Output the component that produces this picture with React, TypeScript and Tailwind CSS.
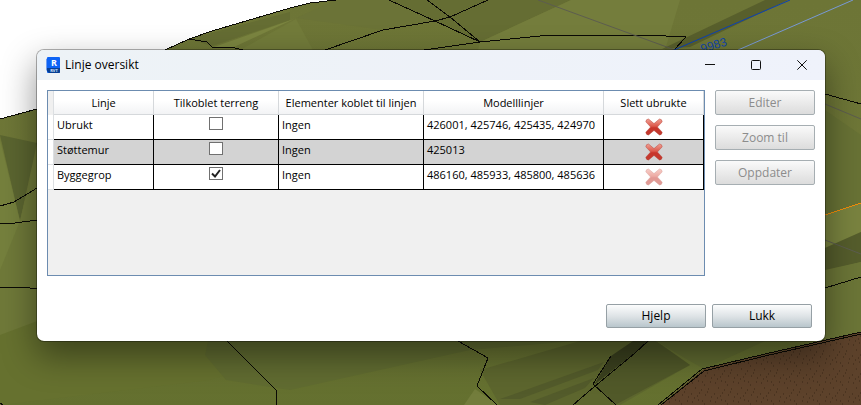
import { useState } from "react"
import clsx from "clsx"

const lines = [
  { name: "Ubrukt", terrain: false, elements: "Ingen", models: "426001, 425746, 425435, 424970", removable: true },
  { name: "Støttemur", terrain: false, elements: "Ingen", models: "425013", removable: true },
  { name: "Byggegrop", terrain: true, elements: "Ingen", models: "486160, 485933, 485800, 485636", removable: false },
]

const columns = ["Linje", "Tilkoblet terreng", "Elementer koblet til linjen", "Modelllinjer", "Slett ubrukte"]

function Terrain() {
  return (
    <svg
      className="absolute inset-0 h-full w-full"
      viewBox="0 0 861 405"
      preserveAspectRatio="xMidYMid slice"
      aria-hidden="true"
    >
      <defs>
        <linearGradient id="ground" x1="0" y1="0" x2="0" y2="1">
          <stop offset="0" stopColor="#6d7536" />
          <stop offset="0.6" stopColor="#6f7838" />
          <stop offset="1" stopColor="#64702f" />
        </linearGradient>
        <pattern id="soil" width="23" height="19" patternUnits="userSpaceOnUse">
          <rect width="23" height="19" fill="#5d422b" />
          <path
            d="M2 3h1M8 1h1M14 5h1M20 2h1M5 8h1M11 10h1M18 9h1M1 14h1M7 16h1M15 15h1M21 17h1M12 2h1M9 13h1M17 12h1M4 18h1"
            stroke="#3b2817"
            strokeWidth="1"
          />
        </pattern>
      </defs>
      <rect width="861" height="405" fill="#fff" />
      <path d="M0 119 37 109 165 50 189 39 212 31 290 8 310 3 336 0H861V405H0Z" fill="url(#ground)" />

      {/* facets */}
      <path d="M189 39 290 12V20L212 46Z" fill="#656d33" />
      <path d="M240 50 296 19 313 50Z" fill="#727b3a" />
      <path d="M214 47 294 19 234 47Z" fill="#7b8540" />
      <path d="M296 18 336 0H390L435 21 383 30Z" fill="#6b7337" />
      <path d="M390 0H571L480 42 435 21Z" fill="#656d33" />
      <path d="M480 42 571 0H680L665 50H478Z" fill="#747d3c" />
      <path d="M765 0H788L690 47 662 49Z" fill="#585f2c" />
      <path d="M0 135 37 143 20 221Z" fill="#5b6530" />
      <path d="M0 140 20 221 0 290Z" fill="#75803d" />
      <path d="M20 221 37 150V340L0 400V270Z" fill="#6f7939" />
      <path d="M825 110 861 135V203L825 214Z" fill="#687235" />
      <path d="M825 215 861 203V232L825 248Z" fill="#79833f" />
      <path d="M825 248 861 232V262L825 270Z" fill="#555d2c" />
      <path d="M825 271 861 262V332L825 341Z" fill="#6b7537" />
      <path d="M0 335 40 320 220 341 330 341 210 380 0 405Z" fill="#66712f" />
      <path d="M208 341H575L470 350 290 390 226 380 205 355Z" fill="#616c31" />
      <path d="M475 389 464 405H498Z" fill="#737d3c" />
      <path d="M480 370 580 341H656L690 365 620 405H500Z" fill="#5d662e" />
      <path d="M611 356 633 341H650L594 385Z" fill="#3b411f" />
      <path d="M596 386 650 341 656 341 690 365 615 405Z" fill="#515929" />
      <path d="M500 399 604 362 598 370 520 399ZM530 402 594 378 585 388 545 405Z" fill="#535b2b" />
      <path d="M656 341H765L704 369 688 360Z" fill="#616b31" />
      <path d="M704 369 861 332V405H660Z" fill="url(#soil)" />

      {/* triangulation edges */}
      <g fill="none" stroke="#0a0a05" shapeRendering="crispEdges">
        <path d="M0 119 37 109M165 50 189 39 212 31 290 8 310 3 336 0M189 39 207 42 212 47 231 47 243 50" />
        <path d="M325 50 383 30 435 21 450 17 488 0M389 0 435 21 480 42M427 0 450 17 480 42M424 50 480 42 550 35 645 35 686 37 674 50" />
        <path d="M825 94 861 104M0 206 14 202 37 188M0 223 15 223 37 220M0 287 23 287 37 289" />
        <path d="M227 341 250 364 276 390V405M458 341 488 358 477 386 497 405M0 403 3 405" />
        <path d="M648 341 635 353 594 387 573 405M611 356 593 384 616 405M825 288 861 277" />
        <path d="M658 405 702 369 765 354 861 332M661 405 704 371 765 356 861 334" />
      </g>
      <g fill="none">
        <path d="M538 0 675 50M825 240 861 254" stroke="#5d5d50" />
        <path d="M825 104 861 119" stroke="#5d5d50" />
        <path d="M674 50 790 0" stroke="#0c41b5" />
        <path d="M738 50 853 0" stroke="#7899d6" />
        <path d="M825 215 861 203" stroke="#f28c08" shapeRendering="crispEdges" />
      </g>
      <text
        x="702"
        y="53"
        transform="rotate(-17 702 53)"
        fill="#1246a8"
        fontSize="12"
        fontFamily="'Liberation Sans', sans-serif"
      >
        9983
      </text>
    </svg>
  )
}

function RevitIcon() {
  return (
    <svg width="15" height="17" viewBox="0 0 15 17" aria-hidden="true">
      <path d="M0 2 2 1V15L0 13Z" fill="#6f9df0" />
      <rect x="1" y="0" width="13" height="16" rx="1" fill="#0d63f5" />
      <path d="M1 11H14V15Q14 16 13 16H3L1 14Z" fill="#073f93" />
      <text x="8" y="9" textAnchor="middle" fontSize="9" fontWeight="700" fill="#fff" fontFamily="'Open Sans', sans-serif">
        R
      </text>
      <text x="8" y="15" textAnchor="middle" fontSize="4" fontWeight="700" fill="#dbe8ff" fontFamily="'Open Sans', sans-serif">
        RVT
      </text>
    </svg>
  )
}

function CrossIcon() {
  return (
    <svg width="18" height="18" viewBox="0 0 18 18" aria-hidden="true">
      <defs>
        <linearGradient id="cross" x1="0" y1="0" x2="0" y2="1">
          <stop offset="0" stopColor="#f0a094" />
          <stop offset="0.45" stopColor="#dc584b" />
          <stop offset="0.55" stopColor="#c8352b" />
          <stop offset="1" stopColor="#c23b30" />
        </linearGradient>
      </defs>
      <path
        d="M3.6 1 9 5.6 14.4 1Q17 1 17.2 3.8L12.4 9 17.2 14.2Q17 17 14.4 17L9 12.4 3.6 17Q1 17 .8 14.2L5.6 9 .8 3.8Q1 1 3.6 1Z"
        fill="url(#cross)"
        stroke="#b8453b"
        strokeOpacity="0.6"
        strokeWidth="0.8"
        strokeLinejoin="round"
      />
    </svg>
  )
}

function SideButton({ label }: { label: string }) {
  return (
    <button
      disabled
      className="h-[25px] w-full rounded-xs border border-[#a6aeb2] bg-linear-to-b from-[#fafafa] to-[#dcdcdc] text-[#8c8c8c]"
    >
      {label}
    </button>
  )
}

function FooterButton({ label }: { label: string }) {
  return (
    <button className="h-6 w-[100px] rounded-xs border border-[#96a0a5] bg-linear-to-b from-[#fcfdfd] via-[#dfe4e7] to-[#b9c6cc]">
      {label}
    </button>
  )
}

export default function App() {
  const [checked, setChecked] = useState(lines.map((line) => line.terrain))

  const toggle = (index: number) => setChecked(checked.map((value, i) => (i === index ? !value : value)))

  return (
    <main className="relative min-h-screen overflow-hidden pt-[49px] pr-[35px] pb-[63px] pl-9 font-['Open_Sans',sans-serif] text-xs text-black">
      <Terrain />

      <section
        role="dialog"
        aria-labelledby="title"
        className="relative overflow-hidden rounded-lg border border-black/30 bg-white bg-clip-padding shadow-[0_14px_34px_rgba(0,0,0,0.42)]"
      >
        {/* Title bar */}
        <header className="flex h-[30px] items-center bg-linear-to-r from-[#edf2f6] to-[#eff2fb] pl-[9px]">
          <RevitIcon />
          <h1 id="title" className="ml-1 flex-1">
            Linje oversikt
          </h1>
          <button aria-label="Minimer" className="flex h-full w-[46px] items-center justify-center">
            <svg width="10" height="10" viewBox="0 0 10 10" aria-hidden="true">
              <path d="M0 4.5H10" stroke="#111" />
            </svg>
          </button>
          <button aria-label="Maksimer" className="flex h-full w-[46px] items-center justify-center">
            <svg width="10" height="10" viewBox="0 0 10 10" fill="none" aria-hidden="true">
              <rect x="0.5" y="0.5" width="9" height="9" rx="1" stroke="#111" />
            </svg>
          </button>
          <button aria-label="Lukk vindu" className="flex h-full w-[46px] items-center justify-center">
            <svg width="10" height="10" viewBox="0 0 10 10" aria-hidden="true">
              <path d="M.3 .3 9.7 9.7M9.7 .3 .3 9.7" stroke="#111" />
            </svg>
          </button>
        </header>

        <div className="flex gap-[10px] px-[10px] pt-[10px]">
          <div className="min-h-[186px] flex-1 border border-[#6c8cb0] bg-[#f0f0f0]">
            <table className="w-full table-fixed border-separate border-spacing-0 text-[11px]">
              <colgroup>
                <col className="w-[6px]" />
                <col className="w-[100px]" />
                <col className="w-[125px]" />
                <col className="w-[145px]" />
                <col className="w-[180px]" />
                <col />
              </colgroup>
              <thead>
                <tr className="h-6 bg-linear-to-b from-white from-40% to-[#f1f2f4]">
                  <td className="border-r border-[#dcdfe2] bg-[#f0f0f0] p-0" />
                  {columns.map((column) => (
                    <th
                      key={column}
                      className="border-r border-b border-[#d5d8db] px-0 pt-0.5 pb-0 text-center font-normal whitespace-nowrap"
                    >
                      {column}
                    </th>
                  ))}
                </tr>
              </thead>
              <tbody>
                {lines.map((line, index) => (
                  <tr
                    key={line.name}
                    className={clsx(
                      "h-[25px] align-top leading-5 whitespace-nowrap *:border-r *:border-b *:border-black",
                      index % 2 ? "bg-[#d3d3d3]" : "bg-white"
                    )}
                  >
                    <td className="border-[#dcdfe2]! bg-white p-0" />
                    <td className="px-[3px] py-0">{line.name}</td>
                    <td className="p-0">
                      <label className="relative mx-auto mt-0.5 flex h-[13px] w-[14px]">
                        <input
                          type="checkbox"
                          aria-label={`${line.name} tilkoblet terreng`}
                          checked={checked[index]}
                          onChange={() => toggle(index)}
                          className="peer h-full w-full appearance-none border border-[#707070] bg-white"
                        />
                        <svg
                          className="absolute inset-0 hidden peer-checked:block"
                          viewBox="0 0 14 13"
                          fill="none"
                          aria-hidden="true"
                        >
                          <path d="M3 6.5 6 9.5 11 3" stroke="#212121" strokeWidth="2" />
                        </svg>
                      </label>
                    </td>
                    <td className="px-[3px] py-0">{line.elements}</td>
                    <td className="px-[3px] py-0">{line.models}</td>
                    <td className="p-0">
                      <button
                        aria-label={`Slett ${line.name}`}
                        disabled={!line.removable}
                        className="mx-auto mt-[3px] block disabled:opacity-50"
                      >
                        <CrossIcon />
                      </button>
                    </td>
                  </tr>
                ))}
              </tbody>
            </table>
          </div>

          <div className="flex w-[100px] flex-col gap-[10px]">
            <SideButton label="Editer" />
            <SideButton label="Zoom til" />
            <SideButton label="Oppdater" />
          </div>
        </div>

        {/* Bottom buttons */}
        <footer className="mt-7 flex justify-end gap-1.5 pr-[13px] pb-[13px]">
          <FooterButton label="Hjelp" />
          <FooterButton label="Lukk" />
        </footer>
      </section>
    </main>
  )
}
